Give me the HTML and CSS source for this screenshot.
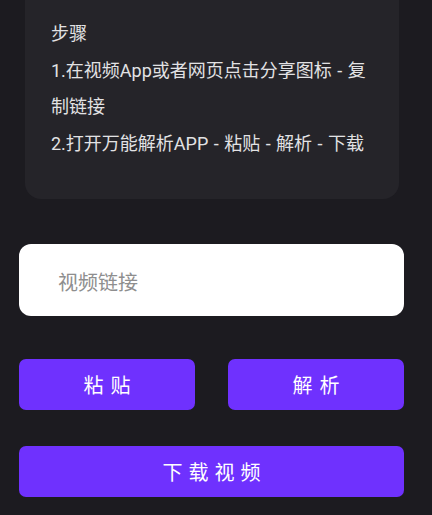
FILE: index.html
```html
<!DOCTYPE html>
<html lang="zh-CN">
<head>
<meta charset="utf-8">
<title>万能解析</title>
<link rel="stylesheet" href="styles.css">
</head>
<body>
<main class="page">
  <section class="steps">
    <p class="steps-title">步骤</p>
    <p class="step">1.在视频App或者网页点击分享图标 - 复制链接</p>
    <p class="step">2.打开万能解析APP - 粘贴 - 解析 - 下载</p>
  </section>
  <input class="link-input" type="text" placeholder="视频链接">
  <div class="actions">
    <button class="btn" type="button">粘贴</button>
    <button class="btn" type="button">解析</button>
  </div>
  <button class="btn btn-wide" type="button">下载视频</button>
</main>
</body>
</html>
```
FILE: styles.css
```css
html, body {
  margin: 0;
  padding: 0;
  background: #1c1b20;
}
body {
  font-family: Roboto, "Noto Sans CJK SC", sans-serif;
  width: 432px;
  height: 515px;
  overflow: hidden;
}
.page {
  display: flex;
  flex-direction: column;
  padding: 0 28px 0 19px;
}
.steps {
  margin: 0 5px 0 6px;
  padding: 16px 26px 37px 26px;
  background: #252429;
  border-radius: 0 0 16px 16px;
  color: #e2e2e4;
  font-size: 18px;
  line-height: 36.5px;
  word-spacing: 1px;
}
.steps p {
  margin: 0;
}
.link-input {
  margin-top: 45px;
  height: 72px;
  box-sizing: border-box;
  border: none;
  outline: none;
  border-radius: 12px;
  background: #ffffff;
  padding: 6px 0 0 39px;
  font-family: Roboto, "Noto Sans CJK SC", sans-serif;
  font-size: 20px;
  color: #222;
}
.link-input::placeholder {
  color: #8e8e8e;
}
.actions {
  margin-top: 43px;
  display: grid;
  grid-template-columns: 1fr 1fr;
  column-gap: 33px;
}
.btn {
  height: 51px;
  border: none;
  border-radius: 7px;
  background: #6f31fe;
  color: #ffffff;
  font-family: Roboto, "Noto Sans CJK SC", sans-serif;
  font-size: 20px;
  letter-spacing: 7px;
  padding: 0 0 0 7px;
}
.btn-wide {
  margin-top: 36px;
  letter-spacing: 6px;
  padding-left: 6px;
}
```
